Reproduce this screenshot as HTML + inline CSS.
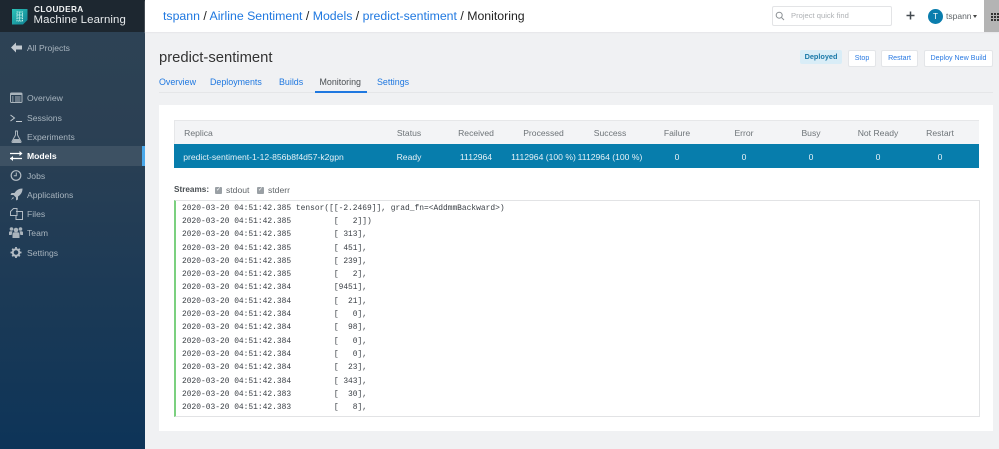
<!DOCTYPE html>
<html><head><meta charset="utf-8">
<style>
html,body{margin:0;padding:0;background:#f0f1f3}
body{width:999px;height:449px;overflow:hidden;position:relative;font-family:"Liberation Sans",sans-serif;color:#333}
#wrap{position:absolute;left:0;top:0;width:999px;height:449px;background:#f0f1f3;filter:blur(.3px);overflow:hidden}
.a{position:absolute;white-space:nowrap}
#side{position:absolute;left:0;top:0;width:145px;height:449px;background:linear-gradient(180deg,#2e4355 0,#2b4054 30%,#0d3458 100%)}
#logo{position:absolute;left:0;top:0;width:145px;height:32px;background:#1d2730}
.n{position:absolute;left:27px;font-size:8.6px;color:#a9b5bf;line-height:12px;white-space:nowrap}
.lnk{color:#1f78e0}
.tab{top:76px;font-size:8.9px;line-height:12px}
.th{position:absolute;top:126.500px;font-size:8.6px;line-height:12px;color:#6d7377;white-space:nowrap;transform:translateX(-50%)}
.td{position:absolute;top:150.500px;font-size:8.6px;line-height:12px;color:#e6f1f6;white-space:nowrap;transform:translateX(-50%)}
.btn{position:absolute;top:50px;height:15px;background:#fff;border:1px solid #e3e5e8;border-radius:2px;font-size:7.1px;line-height:15px;text-align:center;color:#2a7ae2;white-space:nowrap}
#log{position:absolute;left:174px;top:200px;width:803px;height:215px;background:#fff;border:1px solid #e2e3e5;border-left:2px solid #7bd07f;overflow:hidden}
#log pre{margin:0;position:absolute;left:6px;top:.6px;font-family:"Liberation Mono",monospace;font-size:7.92px;line-height:13.32px;color:#3a3f45}
.cb{position:absolute;top:186.500px;width:7px;height:7px;background:#9aa0a5;border-radius:1px;color:#fff;font-size:6px;line-height:7px;text-align:center}
.s{top:184px;font-size:8.600px;line-height:12px;color:#5f6468}
</style></head>
<body>
<div id="wrap">
<div id="side">
  <div id="logo">
    <svg class="a" style="left:12px;top:9px" width="16" height="16" viewBox="0 0 16 16"><defs><linearGradient id="g" x1="0" y1="0" x2="1" y2="1"><stop offset="0" stop-color="#2cc4b8"/><stop offset="1" stop-color="#0f7f92"/></linearGradient></defs><path d="M0 0H15.500V11L11 15.500H0Z" fill="url(#g)"/><path d="M5 3h5.500v9H5z" fill="none" stroke="#bfeee8" stroke-width="1" stroke-dasharray="1.500 .7"/><path d="M5 6h5.500M5 9h5.500M7.700 3v9" stroke="#bfeee8" stroke-width=".7"/></svg>
    <div class="a" style="left:34px;top:5px;font-size:8.200px;line-height:10px;font-weight:bold;color:#f2f4f5;letter-spacing:.4px">CLOUDERA</div>
    <div class="a" style="left:33.500px;top:13px;font-size:11.400px;line-height:14px;color:#e8ebed;letter-spacing:.12px">Machine Learning</div>
  </div>
  <svg class="a" style="left:10px;top:41px" width="13" height="13" viewBox="0 0 13 13"><path d="M6 1.500L1 6.500L6 11.500V8.500H12V4.500H6Z" fill="#c3cad0"/></svg>
  <div class="n" style="top:42px">All Projects</div>

  <svg class="a" style="left:10px;top:92px" width="13" height="12" viewBox="0 0 13 12"><rect x=".5" y="1" width="11.500" height="9.500" rx="1" fill="none" stroke="#aab4bc"/><rect x=".5" y="1" width="11.500" height="2" fill="#aab4bc"/><path d="M2 5h1.500M5 5h5.500M2 7h1.500M5 7h5.500M2 9h1.500M5 9h5.500" stroke="#aab4bc"/></svg>
  <div class="n" style="top:92px">Overview</div>

  <svg class="a" style="left:10px;top:112px" width="13" height="12" viewBox="0 0 13 12"><path d="M.5 3L4.500 6L.5 9" fill="none" stroke="#c3cad0"/><path d="M6 9.500h6" stroke="#c3cad0"/></svg>
  <div class="n" style="top:111.500px">Sessions</div>

  <svg class="a" style="left:10px;top:130px" width="13" height="13" viewBox="0 0 13 13"><path d="M5 1h3M5.500 1v4L2 11.500q-.3 1 .7 1h7.600q1 0 .7-1L7.500 5V1" fill="none" stroke="#aab4bc"/><path d="M3.700 9h5.600l1.200 3H2.500Z" fill="#aab4bc"/></svg>
  <div class="n" style="top:130.500px">Experiments</div>

  <div class="a" style="left:0;top:146px;width:142px;height:20px;background:#3d5163"></div>
  <div class="a" style="left:142px;top:146px;width:3px;height:20px;background:#4aa8ea"></div>
  <svg class="a" style="left:10px;top:150px" width="13" height="12" viewBox="0 0 13 12"><path d="M0 3.500H10M0 8.500H12" stroke="#fff" stroke-width="1.300" fill="none"/><path d="M9.500 1L12.500 3.500L9.500 6ZM3 6L0 8.500L3 11Z" fill="#fff"/></svg>
  <div class="n" style="top:150px;color:#fff;font-weight:bold">Models</div>

  <svg class="a" style="left:10px;top:169px" width="13" height="13" viewBox="0 0 13 13"><circle cx="6" cy="6.500" r="4.800" fill="none" stroke="#b3bcc4" stroke-width="1.200"/><path d="M6.300 3.500V6.800H3.800" fill="none" stroke="#b3bcc4"/></svg>
  <div class="n" style="top:169.500px">Jobs</div>

  <svg class="a" style="left:10px;top:188px" width="13" height="13" viewBox="0 0 13 13"><path d="M12.500 .5C9 .5 6.500 2 4.500 5H1.500L.5 7H3.500L6 9.500V12.500L8 11.500V8.500C11 6.500 12.500 4 12.500 .5ZM3 9L1 12 4 10Z" fill="#b3bcc4"/></svg>
  <div class="n" style="top:188.500px">Applications</div>

  <svg class="a" style="left:10px;top:207px" width="13" height="13" viewBox="0 0 13 13"><path d="M.5 4.500L3.500 1.500H7V8.500H.5ZM6 4.500L8.500 4.500H12.500V12.500H6V8.500" fill="none" stroke="#b3bcc4"/></svg>
  <div class="n" style="top:208px">Files</div>

  <svg class="a" style="left:9px;top:226px" width="14" height="13" viewBox="0 0 14 13"><circle cx="7" cy="4" r="2.300" fill="#aab4bc"/><circle cx="2.500" cy="3" r="1.800" fill="#aab4bc"/><circle cx="11.500" cy="3" r="1.800" fill="#aab4bc"/><path d="M3.500 12V8q0-1.800 2-1.800h3q2 0 2 1.800v4Z" fill="#aab4bc"/><path d="M0 9V6.500q0-1.300 1.500-1.300h2L2.600 9ZM14 9V6.500q0-1.300-1.500-1.300h-2l.9 3.800Z" fill="#aab4bc"/></svg>
  <div class="n" style="top:227px">Team</div>

  <svg class="a" style="left:10px;top:246px" width="13" height="13" viewBox="0 0 13 13"><circle cx="6" cy="6.500" r="3.300" fill="none" stroke="#b3bcc4" stroke-width="2"/><path d="M6 1v11M.5 6.500h11M2.200 2.700l7.600 7.600M9.800 2.700l-7.600 7.600" stroke="#b3bcc4" stroke-width="1.800" stroke-dasharray="2 7 2 0"/></svg>
  <div class="n" style="top:246.500px">Settings</div>
</div>

<!-- top bar -->
<div class="a" style="left:145px;top:0;width:854px;height:32px;background:#fff;box-shadow:0 1px 1px #e6e7e9"></div>
<div class="a" style="left:163px;top:8px;font-size:12.300px;line-height:16px;color:#222"><span class="lnk">tspann</span> / <span class="lnk">Airline Sentiment</span> / <span class="lnk">Models</span> / <span class="lnk">predict-sentiment</span> / Monitoring</div>

<div class="a" style="left:772px;top:6px;width:118px;height:18px;background:#fff;border:1px solid #e3e4e6;border-radius:2px"></div>
<svg class="a" style="left:775px;top:11px" width="10" height="10" viewBox="0 0 10 10"><circle cx="4.200" cy="4.200" r="3" fill="none" stroke="#8b9094"/><path d="M6.500 6.500L9 9" stroke="#8b9094"/></svg>
<div class="a" style="left:791px;top:10px;font-size:7.600px;line-height:12px;color:#aeb1b4">Project quick find</div>
<svg class="a" style="left:906px;top:11px" width="9" height="9" viewBox="0 0 9 9"><path d="M4.500 .5v8M.5 4.500h8" stroke="#444a50" stroke-width="1.500"/></svg>
<div class="a" style="left:928px;top:9px;width:15px;height:15px;border-radius:50%;background:#0a7dad;color:#fff;font-size:8px;line-height:15px;text-align:center">T</div>
<div class="a" style="left:946px;top:10px;font-size:8.500px;line-height:12px;color:#5f6468">tspann</div>
<div class="a" style="left:973px;top:15px;width:0;height:0;border:2.500px solid transparent;border-top:3px solid #444;border-bottom:0"></div>
<div class="a" style="left:984px;top:0;width:15px;height:32px;background:#b4b4b4"></div>
<svg class="a" style="left:991px;top:13px" width="8" height="8" viewBox="0 0 8 8"><path d="M0 0h2v2H0zM3 0h2v2H3zM6 0h2v2H6zM0 3h2v2H0zM3 3h2v2H3zM6 3h2v2H6zM0 6h2v2H0zM3 6h2v2H3zM6 6h2v2H6z" fill="#333"/></svg>

<!-- title -->
<div class="a" style="left:159px;top:47.500px;font-size:14.800px;line-height:20px;color:#333">predict-sentiment</div>
<div class="a" style="left:800px;top:50px;width:42px;height:14px;background:#d9edf7;border-radius:2px;font-size:7.300px;line-height:14px;text-align:center;color:#1a79a8;font-weight:bold">Deployed</div>
<div class="btn" style="left:848px;width:26px">Stop</div>
<div class="btn" style="left:881px;width:35px">Restart</div>
<div class="btn" style="left:924px;width:67px">Deploy New Build</div>

<!-- tabs -->
<div class="a" style="left:159px;top:92px;width:834px;height:1px;background:#e5e6e8"></div>
<div class="a lnk tab" style="left:159px">Overview</div>
<div class="a lnk tab" style="left:210px">Deployments</div>
<div class="a lnk tab" style="left:279px">Builds</div>
<div class="a tab" style="left:319.500px;color:#4a4f53">Monitoring</div>
<div class="a lnk tab" style="left:377px">Settings</div>
<div class="a" style="left:315px;top:91px;width:52px;height:1.500px;background:#1f78e0"></div>

<!-- panel -->
<div class="a" style="left:159px;top:105px;width:834px;height:326px;background:#fff"></div>

<!-- table -->
<div class="a" style="left:174px;top:120px;width:805px;height:24px;background:#f3f4f6;border:solid #e6e7e9;border-width:1px 0 0 1px;box-sizing:border-box"></div>
<div class="a" style="left:174px;top:144px;width:805px;height:24px;background:#077dac"></div>
<div class="th" style="left:198.500px">Replica</div>
<div class="th" style="left:409px">Status</div>
<div class="th" style="left:476px">Received</div>
<div class="th" style="left:543.500px">Processed</div>
<div class="th" style="left:610px">Success</div>
<div class="th" style="left:677px">Failure</div>
<div class="th" style="left:744px">Error</div>
<div class="th" style="left:811px">Busy</div>
<div class="th" style="left:878px">Not Ready</div>
<div class="th" style="left:940px">Restart</div>

<div class="td" style="left:263.500px">predict-sentiment-1-12-856b8f4d57-k2gpn</div>
<div class="td" style="left:409px">Ready</div>
<div class="td" style="left:476px">1112964</div>
<div class="td" style="left:543.500px">1112964 (100 %)</div>
<div class="td" style="left:610px">1112964 (100 %)</div>
<div class="td" style="left:677px">0</div>
<div class="td" style="left:744px">0</div>
<div class="td" style="left:811px">0</div>
<div class="td" style="left:878px">0</div>
<div class="td" style="left:940px">0</div>

<!-- streams -->
<div class="a" style="left:174px;top:184px;font-size:8.200px;line-height:12px;font-weight:bold;color:#4a4f53">Streams:</div>
<div class="cb" style="left:215px">✓</div>
<div class="a s" style="left:226px">stdout</div>
<div class="cb" style="left:257px">✓</div>
<div class="a s" style="left:268px">stderr</div>

<div id="log"><pre>2020-03-20 04:51:42.385 tensor([[-2.2469]], grad_fn=&lt;AddmmBackward&gt;)
2020-03-20 04:51:42.385         [   2]])
2020-03-20 04:51:42.385         [ 313],
2020-03-20 04:51:42.385         [ 451],
2020-03-20 04:51:42.385         [ 239],
2020-03-20 04:51:42.385         [   2],
2020-03-20 04:51:42.384         [9451],
2020-03-20 04:51:42.384         [  21],
2020-03-20 04:51:42.384         [   0],
2020-03-20 04:51:42.384         [  98],
2020-03-20 04:51:42.384         [   0],
2020-03-20 04:51:42.384         [   0],
2020-03-20 04:51:42.384         [  23],
2020-03-20 04:51:42.384         [ 343],
2020-03-20 04:51:42.383         [  30],
2020-03-20 04:51:42.383         [   8],
2020-03-20 04:51:42.383         [   1],</pre></div>
</div>
</body></html>
